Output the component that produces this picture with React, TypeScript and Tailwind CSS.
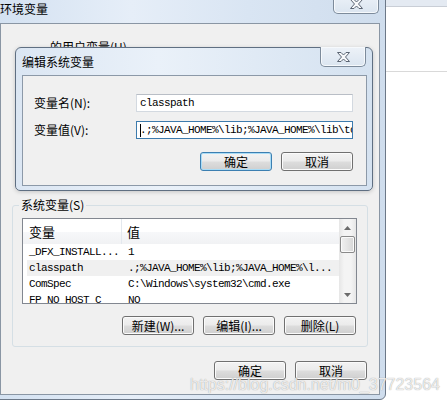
import clsx from 'clsx'

const ui = "font-['Noto_Sans_CJK_SC',sans-serif]"
const mono = "font-['Liberation_Mono','Noto_Sans_CJK_SC',monospace]"

const rows = [
  { name: '_DFX_INSTALL...', value: '1' },
  { name: 'classpath', value: '.;%JAVA_HOME%\\lib;%JAVA_HOME%\\l...', active: true },
  { name: 'ComSpec', value: 'C:\\Windows\\system32\\cmd.exe' },
  { name: 'FP_NO_HOST_C', value: 'NO' },
]

function WinButton({ label, primary }: { label: string; primary?: boolean }) {
  return (
    <div
      className={clsx(
        'flex h-[19px] w-[72px] items-center justify-center rounded-[3px] border text-[12px] leading-none text-black',
        'bg-[linear-gradient(#f3f3f3_0%,#ebebeb_48%,#dddddd_52%,#cfcfcf_100%)]',
        primary
          ? 'border-[#3c7fb1] shadow-[inset_0_0_0_1px_#a9dcf6]'
          : 'border-[#707070] shadow-[inset_0_0_0_1px_#fbfbfb]',
      )}
    >
      {label}
    </div>
  )
}

function CloseButton({ className }: { className?: string }) {
  return (
    <div
      className={clsx(
        'flex w-[46px] items-center justify-center rounded-b-[5px] border border-t-0 border-[#7d8b9b]',
        'bg-[linear-gradient(#edf2f8,#dbe5f0)] shadow-[inset_0_0_0_1px_#f6f9fc]',
        className,
      )}
    >
      <svg width="13" height="10" viewBox="0 0 13 10">
        <path
          d="M0.5 0.5 H4 L6.5 3 L9 0.5 H12.5 L8.5 5 L12.5 9.5 H9 L6.5 7 L4 9.5 H0.5 L4.5 5 Z"
          fill="#f7f8fa"
          stroke="#5b6573"
          strokeWidth="1"
          strokeLinejoin="round"
        />
      </svg>
    </div>
  )
}

function EnvWindow() {
  return (
    <div className="absolute left-[-6px] top-[-6px] flex h-[406px] w-[392px] flex-col rounded-[6px] border border-[#6c7888] bg-[linear-gradient(90deg,#d3e1f1_0%,#e6eef8_35%,#d9e5f3_65%,#cfdded_100%)] px-[5px]">
      <div className="flex h-[28px] items-start justify-between">
        <span className={clsx(ui, 'mt-[6px] text-[12px] leading-[16px] text-black')}>环境变量</span>
        <CloseButton className="mr-[1px] mt-[-1px] h-[20px]" />
      </div>

      <div className={clsx(ui, 'flex h-[372px] flex-col border border-[#8a96a4] bg-[#f0f0f0] text-[12px] text-black')}>
        <div className="ml-[49px] mt-[15px] leading-[16px]">的用户变量(U)</div>

        <fieldset className="ml-[11px] mt-[142px] w-[356px] rounded-[3px] border border-[#d5dfe5] pb-[11px]">
          <legend className="ml-[6px] px-[2px] leading-[16px]">系统变量(S)</legend>

          <div className="ml-[9px] mt-[5px] flex h-[86px] w-[335px] overflow-hidden border border-[#828790] bg-white">
            <div className="flex flex-1 flex-col">
              <div className="flex h-[25px] shrink-0 bg-[linear-gradient(#ffffff_0%,#ffffff_50%,#f7f8fa_51%,#f1f2f4_100%)]">
                <div className="flex w-[99px] items-center border-r border-[#e3e8ee] pl-[6px] text-[13px]">变量</div>
                <div className="flex items-center pl-[5px] text-[13px]">值</div>
              </div>
              {rows.map((row) => (
                <div
                  key={row.name}
                  className={clsx(
                    mono,
                    'flex h-[16px] shrink-0 items-center text-[11px] leading-none tracking-[-0.6px]',
                    row.active && 'ml-[4px] bg-[#f0f0f0]',
                  )}
                >
                  <div className={clsx('whitespace-nowrap', row.active ? 'w-[95px] pl-[2px]' : 'w-[99px] pl-[6px]')}>{row.name}</div>
                  <div className="whitespace-nowrap pl-[6px]">{row.value}</div>
                </div>
              ))}
            </div>

            <div className="flex w-[17px] flex-col items-center bg-[linear-gradient(90deg,#e6e6e6,#f4f4f4_30%,#f4f4f4_70%,#e6e6e6)]">
              <div className="flex h-[17px] w-full items-center justify-center">
                <svg width="7" height="4" viewBox="0 0 7 4">
                  <path d="M0 4 L3.5 0 L7 4 Z" fill="#6b6b6b" />
                </svg>
              </div>
              <div className="h-[17px] w-[15px] rounded-[2px] border border-[#8a8a8a] bg-[linear-gradient(90deg,#f0f0f0,#e4e4e4_50%,#d6d6d6)] shadow-[inset_0_0_0_1px_#fafafa]" />
              <div className="flex-1" />
              <div className="flex h-[17px] w-full items-center justify-center">
                <svg width="7" height="4" viewBox="0 0 7 4">
                  <path d="M0 0 L3.5 4 L7 0 Z" fill="#6b6b6b" />
                </svg>
              </div>
            </div>
          </div>

          <div className="mr-[11px] mt-[12px] flex justify-end gap-[9px]">
            <WinButton label="新建(W)..." />
            <WinButton label="编辑(I)..." />
            <WinButton label="删除(L)" />
          </div>
        </fieldset>

        <div className="mr-[12px] mt-[14px] flex justify-end gap-[9px]">
          <WinButton label="确定" />
          <WinButton label="取消" />
        </div>
      </div>
    </div>
  )
}

function EditDialog() {
  return (
    <div className="absolute left-[15px] top-[47px] flex h-[144px] w-[358px] flex-col rounded-t-[6px] rounded-b-[5px] border border-[#5f6f82] bg-[linear-gradient(90deg,#dbe6f3_0%,#eaf1f9_40%,#dde8f4_75%,#d5e2f0_100%)] pl-[6px] pr-[5px] shadow-[0_1px_4px_rgba(0,0,0,0.18)]">
      <div className="flex h-[27px] items-start justify-between">
        <span className={clsx(ui, 'mt-[6px] text-[12px] leading-[16px] text-black')}>编辑系统变量</span>
        <CloseButton className="mr-[1px] mt-[-1px] h-[20px]" />
      </div>

      <div className={clsx(ui, 'flex h-[111px] flex-col border border-[#8c99a8] bg-[#f0f0f0] pl-[11px] pr-[13px] pt-[18px] text-[12px] text-black')}>
        <div className="grid grid-cols-[102px_217px] items-center gap-y-[9px]">
          <span className="leading-[16px]">变量名(N):</span>
          <div className={clsx(mono, 'flex h-[18px] items-center border border-[#d3d9e0] border-t-[#b9bec6] bg-white pl-[3px] text-[11px] tracking-[-0.6px]')}>
            classpath
          </div>
          <span className="leading-[16px]">变量值(V):</span>
          <div className={clsx(mono, 'relative flex h-[18px] items-center overflow-hidden whitespace-nowrap border border-[#3d7bad] bg-white pl-[3px] text-[11px] tracking-[-0.6px]')}>
            .;%JAVA_HOME%\lib;%JAVA_HOME%\lib\tools.jar
            <span className="absolute left-[3px] top-[2px] h-[13px] w-[1px] bg-black" />
          </div>
        </div>

        <div className="mt-[13px] flex justify-end gap-[9px]">
          <WinButton label="确定" primary />
          <WinButton label="取消" />
        </div>
      </div>
    </div>
  )
}

export default function App() {
  return (
    <div className="relative h-[403px] w-[447px] overflow-hidden bg-white">
      <div className="h-[7px] border-b border-[#c9ced6] bg-[#e4eaf2]" />
      <div className="h-[65px] border-b border-[#d9d9d9]" />

      <EnvWindow />
      <EditDialog />

      <div className="pointer-events-none absolute left-[190px] top-[377px] font-['Liberation_Sans',sans-serif] text-[16px] leading-none text-white/80 [text-shadow:0_0_1px_#8a8a8a]">
        https://blog.csdn.net/m0_37723564
      </div>
    </div>
  )
}
